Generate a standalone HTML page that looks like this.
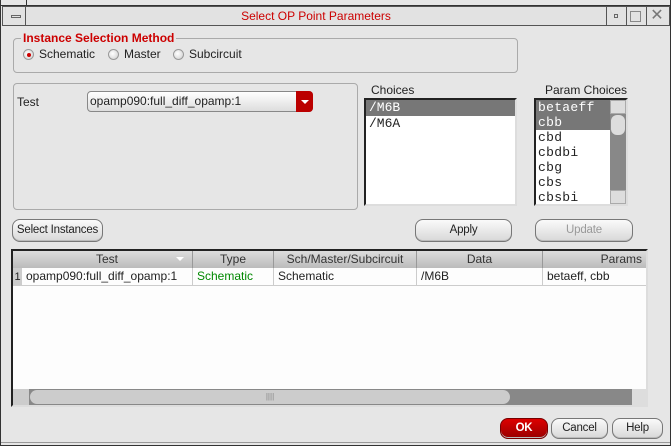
<!DOCTYPE html>
<html><head><meta charset="utf-8"><style>
*{box-sizing:border-box;margin:0;padding:0}
body{width:671px;height:446px;overflow:hidden;background:#e6e6e6;font-family:"Liberation Sans",sans-serif;font-size:12px;color:#222;position:relative}
.a{position:absolute}
.btn{position:absolute;border:1px solid #777;border-radius:8px;background:linear-gradient(#fafafa,#d8d8d8);text-align:center;font-size:11.5px;letter-spacing:-0.2px;line-height:20px;color:#222;box-shadow:inset 0 -1px 0 #bbb;white-space:nowrap}
.mono{font-family:"Liberation Mono",monospace;font-size:13px}
.col{position:absolute;top:0;height:17px;border-right:1px solid #999;text-align:center;line-height:16px;color:#333}
.cell{position:absolute;top:17px;height:18px;border-right:1px solid #ccc;line-height:17px;padding-left:4px;border-bottom:1px solid #ccc}
.radio{position:absolute;width:11px;height:11px;border-radius:50%;border:1px solid #999;background:radial-gradient(circle at 40% 40%,#fff,#ccc)}
</style></head><body>
<div class="a" style="left:0;top:0;width:671px;height:446px;border:1px solid #333;border-top:none"></div>
<div class="a" style="left:2px;top:6px;width:668px;height:20px;background:#e2e2e2;border:1px solid #555"></div>
<div class="a" style="left:7px;top:7px;width:19px;height:18px;border-right:1px solid #555"></div>
<div class="a" style="left:11px;top:15px;width:10px;height:3px;border:1px solid #666"></div>
<div class="a" style="left:0;top:0;width:671px;height:6px;border-bottom:1px solid #333"></div>
<div class="a" style="left:26px;top:0;width:1px;height:6px;background:#333"></div>
<div class="a" style="left:0;top:9px;text-align:center;color:#c00;font-size:12px;line-height:14px;width:632px">Select OP Point Parameters</div>
<div class="a" style="left:606px;top:7px;width:20px;height:18px;border-left:1px solid #555"></div>
<div class="a" style="left:614px;top:14px;width:4px;height:4px;border:1px solid #666"></div>
<div class="a" style="left:626px;top:7px;width:20px;height:18px;border-left:1px solid #555"></div>
<div class="a" style="left:630px;top:11px;width:11px;height:11px;border:1px solid #888"></div>
<div class="a" style="left:646px;top:7px;width:21px;height:18px;border-left:1px solid #555;color:#777;font-size:16px;line-height:18px;text-align:center">✕</div>

<div class="a" style="left:13px;top:38px;width:505px;height:35px;border:1px solid #aaa;border-radius:4px"></div>
<div class="a" style="left:21px;top:31px;background:#e6e6e6;padding:0 2px;color:#c00;font-weight:bold;font-size:12px;line-height:15px">Instance Selection Method</div>
<div class="radio" style="left:23px;top:49px"></div><div class="a" style="left:27px;top:53px;width:4px;height:4px;border-radius:50%;background:#c00"></div>
<div class="a" style="left:39px;top:47px;line-height:15px">Schematic</div>
<div class="radio" style="left:108px;top:49px"></div>
<div class="a" style="left:124px;top:47px;line-height:15px">Master</div>
<div class="radio" style="left:173px;top:49px"></div>
<div class="a" style="left:189px;top:47px;line-height:15px">Subcircuit</div>

<div class="a" style="left:13px;top:83px;width:345px;height:127px;border:1px solid #aaa;border-radius:4px"></div>
<div class="a" style="left:17px;top:95px;line-height:15px">Test</div>
<div class="a" style="left:87px;top:91px;width:226px;height:21px;border:1px solid #888;border-radius:4px;background:linear-gradient(#fff,#ddd);line-height:18px;padding-left:2px">opamp090:full_diff_opamp:1</div>
<div class="a" style="left:296px;top:91px;width:17px;height:21px;background:#b00;border-radius:0 4px 4px 0"></div>
<div class="a" style="left:301px;top:100px;width:0;height:0;border-left:4px solid transparent;border-right:4px solid transparent;border-top:4px solid #fff"></div>

<div class="a" style="left:371px;top:83px;line-height:14px">Choices</div>
<div class="a" style="left:364px;top:98px;width:153px;height:108px;border:2px solid #222;border-right-color:#ddd;border-bottom-color:#ddd;background:#fff"></div>
<div class="a mono" style="left:366px;top:100px;width:149px;height:16px;background:#777;color:#fff;padding-left:3px;line-height:16px">/M6B</div>
<div class="a mono" style="left:366px;top:116px;padding-left:3px;line-height:15px">/M6A</div>

<div class="a" style="left:545px;top:83px;line-height:14px">Param Choices</div>
<div class="a" style="left:534px;top:98px;width:94px;height:108px;border:2px solid #222;border-right-color:#ddd;border-bottom-color:#ddd;background:#fff"></div>
<div class="a mono" style="left:536px;top:100px;width:74px;height:30px;background:#777"></div>
<div class="a mono" style="left:538px;top:100px;line-height:15px;color:#222;letter-spacing:0.3px">
<div style="color:#fff">betaeff</div><div style="color:#fff">cbb</div><div>cbd</div><div>cbdbi</div><div>cbg</div><div>cbs</div><div>cbsbi</div></div>
<div class="a" style="left:610px;top:100px;width:16px;height:104px;background:#888"></div>
<div class="a" style="left:610px;top:100px;width:16px;height:14px;background:#ddd;border:1px solid #aaa"></div>
<div class="a" style="left:610px;top:190px;width:16px;height:14px;background:#ddd;border:1px solid #aaa"></div>
<div class="a" style="left:611px;top:115px;width:14px;height:20px;background:#ddd;border-radius:6px"></div>

<div class="btn" style="left:12px;top:219px;width:91px;height:23px">Select Instances</div>
<div class="btn" style="left:415px;top:219px;width:97px;height:23px">Apply</div>
<div class="btn" style="left:535px;top:219px;width:98px;height:23px;color:#999">Update</div>

<div class="a" style="left:11px;top:249px;width:637px;height:158px;border:2px solid #222;border-right-color:#ddd;border-bottom-color:#ddd;background:#fdfdfd;overflow:hidden">
 <div class="a" style="left:0;top:0;width:640px;height:17px;background:linear-gradient(#ddd,#bbb)"></div>
 <div class="col" style="left:9px;width:171px">Test</div>
 <div class="a" style="left:163px;top:6px;width:0;height:0;border-left:4px solid transparent;border-right:4px solid transparent;border-top:4px solid #fff"></div>
 <div class="col" style="left:180px;width:81px">Type</div>
 <div class="col" style="left:261px;width:143px">Sch/Master/Subcircuit</div>
 <div class="col" style="left:404px;width:126px">Data</div>
 <div class="col" style="left:530px;width:110px;text-align:right;padding-right:10px">Params</div>
 <div class="a" style="left:0;top:17px;width:9px;height:18px;background:#ccc;font-size:11px;line-height:18px;text-align:center">1</div>
 <div class="cell" style="left:9px;width:171px">opamp090:full_diff_opamp:1</div>
 <div class="cell" style="left:180px;width:81px;color:#080">Schematic</div>
 <div class="cell" style="left:261px;width:143px">Schematic</div>
 <div class="cell" style="left:404px;width:126px">/M6B</div>
 <div class="cell" style="left:530px;width:110px">betaeff, cbb</div>
 <div class="a" style="left:0;top:138px;width:635px;height:16px;background:#888"></div>
 <div class="a" style="left:0;top:138px;width:16px;height:16px;background:#ccc"></div>
 <div class="a" style="left:619px;top:138px;width:16px;height:16px;background:#ddd"></div>
 <div class="a" style="left:17px;top:139px;width:480px;height:14px;background:#ccc;border-radius:7px;text-align:center;font-size:8px;line-height:14px;color:#888">||||</div>
</div>

<div class="btn" style="left:500px;top:418px;width:48px;height:21px;background:linear-gradient(#d00,#900);color:#fff;font-weight:bold;border-color:#700;line-height:19px">OK</div>
<div class="btn" style="left:551px;top:418px;width:57px;height:21px;line-height:19px">Cancel</div>
<div class="btn" style="left:612px;top:418px;width:51px;height:21px;line-height:19px">Help</div>
<div class="a" style="left:1px;top:442px;width:669px;height:1px;background:#999"></div>
</body></html>
